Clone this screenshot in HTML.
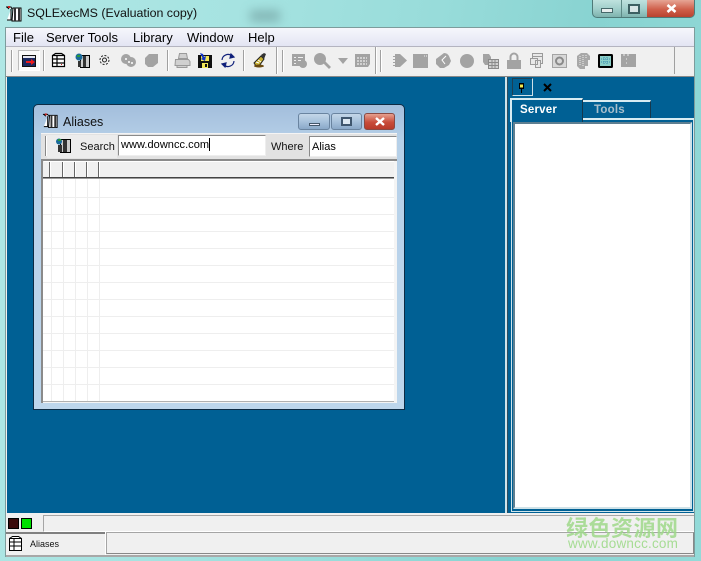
<!DOCTYPE html>
<html><head><meta charset="utf-8">
<style>
html,body{margin:0;padding:0}
body{width:701px;height:561px;overflow:hidden;position:relative;font-family:"Liberation Sans","Noto Sans CJK SC",sans-serif;background:#95dcd9}
.a{position:absolute}
.t{position:absolute;white-space:nowrap;color:#000}
svg{position:absolute;overflow:visible}
.vs{position:absolute;width:1px;background:#a0a0a0;box-shadow:1px 0 0 #fff}
</style></head><body>
<!-- desktop/aero background -->
<div class="a" style="left:0;top:0;width:701px;height:561px;background:linear-gradient(100deg,#b0e7e5 0%,#a6e3e1 30%,#98dcda 55%,#88d3d1 75%,#93dad8 100%)"></div>
<div class="a" style="left:250px;top:10px;width:30px;height:12px;background:#6f9c9c;filter:blur(5px);opacity:.6"></div>
<!-- title -->
<svg style="left:5px;top:5px" width="18" height="17" viewBox="0 0 18 17"><path d="M1 2h5l1 2M2 2l2 2M6 4v11h-4M8 3h8v13H7z" fill="#fff" stroke="#000"/><path d="M9 3h2v13H9zM13 3h2v13h-2z" fill="#333"/><rect x="3" y="1" width="2" height="2" fill="#c22"/></svg>
<div class="t" style="left:27px;top:6px;font-size:12.4px;color:#111">SQLExecMS (Evaluation copy)</div>
<!-- caption buttons -->
<div class="a" style="left:592px;top:0;width:103px;height:18px;border:1px solid #4e7a78;border-top:0;border-radius:0 0 5px 5px;box-sizing:border-box;overflow:hidden;background:linear-gradient(#bfe2de,#a2d0cc 50%,#7fb3ae)">
  <div class="a" style="left:28px;top:0;width:1px;height:17px;background:#5d8a86"></div>
  <div class="a" style="left:54px;top:0;width:48px;height:17px;background:linear-gradient(#e6a595,#cf5f4a 55%,#b8432f)"></div>
  <div class="a" style="left:8px;top:8px;width:12px;height:5px;background:#e8eeee;border:1px solid #46686a;box-sizing:border-box"></div>
  <div class="a" style="left:35px;top:4px;width:12px;height:10px;border:2px solid #3d6062;box-sizing:border-box;background:#d8e6e6"></div>
  <svg style="left:73px;top:4px" width="11" height="9"><path d="M1.500 1l8 7M9.500 1l-8 7" stroke="#fff" stroke-width="2.600"/></svg>
</div>
<!-- client -->
<div class="a" style="left:5px;top:27px;width:690px;height:530px;background:#f0f0f0;border:1px solid #7d9c9c;box-sizing:border-box"></div>
<!-- menu -->
<div class="a" style="left:6px;top:28px;width:688px;height:18px;background:linear-gradient(#f6f7fc,#e3e5f3)"></div>
<div class="a" style="left:6px;top:46px;width:688px;height:1px;background:#b4b4c0"></div>
<div class="t" style="left:13px;top:30px;font-size:13px">File</div>
<div class="t" style="left:46px;top:30px;font-size:13px">Server Tools</div>
<div class="t" style="left:133px;top:30px;font-size:13px">Library</div>
<div class="t" style="left:187px;top:30px;font-size:13px">Window</div>
<div class="t" style="left:248px;top:30px;font-size:13px">Help</div>
<!-- toolbar -->
<div class="a" style="left:6px;top:47px;width:668px;height:27px;background:#f0f0f0;border-right:1px solid #a0a0a0;border-bottom:1px solid #a0a0a0"></div>
<div class="a" style="left:6px;top:74px;width:688px;height:3px;background:#eee;border-bottom:1px solid #888;box-sizing:border-box"></div>
<div class="vs" style="left:11px;top:50px;height:22px"></div>
<div class="a" style="left:18px;top:50px;width:22px;height:21px;background:#fafafa;border:1px solid #bbb;border-right-color:#fff;border-bottom-color:#fff;box-sizing:border-box"></div>
<div class="vs" style="left:43px;top:50px;height:21px"></div>
<div class="vs" style="left:167px;top:50px;height:21px"></div>
<div class="vs" style="left:243px;top:50px;height:21px"></div>
<div class="vs" style="left:276px;top:47px;height:27px"></div>
<div class="vs" style="left:282px;top:50px;height:22px"></div>
<div class="vs" style="left:375px;top:47px;height:27px"></div>
<div class="vs" style="left:380px;top:50px;height:22px"></div>
<!-- toolbar icons -->
<svg style="left:22px;top:55px" width="15" height="12"><rect x=".5" y=".5" width="13" height="11" fill="#1c2a60" stroke="#111"/><rect x="1" y="1" width="12" height="2" fill="#e6e6f0"/><path d="M4 6h5V4l4 3-4 3V8H4z" fill="#ee1c1c"/></svg>
<svg style="left:51px;top:53px" width="16" height="15" fill="#fff" stroke="#000" stroke-width="1.200"><path d="M1.500 2.500l3-2h6l3 2v11h-12zM1.500 2.500h12M1.500 6h12M1.500 10h12M6 2.500v11"/><rect x="10" y="11" width="1" height="1" fill="#c22" stroke="none"/></svg>
<svg style="left:75px;top:53px" width="16" height="16"><path d="M5.500 2.500h9v12h-9z" fill="#ccc" stroke="#000"/><rect x="8" y="3" width="3" height="11" fill="#333"/><circle cx="4" cy="4" r="3.500" fill="#1a6a9a"/><rect x="2" y="2" width="3" height="2" fill="#2a9a3a"/><rect x="3" y="8" width="3" height="6" fill="#333"/></svg>
<svg style="left:99px;top:54px" width="11" height="12" fill="none" stroke="#222"><circle cx="5.500" cy="6" r="2"/><circle cx="5.500" cy="6" r="4.500" stroke-dasharray="2 1.500"/></svg>
<svg style="left:121px;top:54px" width="15" height="13" fill="#a3a3a3"><circle cx="5" cy="5" r="5"/><circle cx="10" cy="8" r="5"/><circle cx="5" cy="5" r="1" fill="#fff"/><circle cx="8" cy="8" r="1" fill="#fff"/><circle cx="11" cy="9" r="1" fill="#fff"/></svg>
<svg style="left:144px;top:53px" width="15" height="14" fill="#a3a3a3"><path d="M5 1h9v9l-5 4H4l-3-3V5z"/></svg>
<svg style="left:174px;top:53px" width="17" height="15" fill="#d0d0d0" stroke="#9a9a9a"><path d="M5.500 .5h7l1 5h-9zM1.500 6.500h13l1.500 2v4H1zM3 12.500h10v2H3z"/></svg>
<svg style="left:198px;top:53px" width="14" height="15"><path d="M0 2h14v13H0z" fill="#111"/><rect x="3" y="3" width="8" height="5" fill="#f2e75a"/><rect x="4" y="10" width="6" height="5" fill="#f2e75a"/><rect x="7" y="11" width="2" height="3" fill="#111"/><path d="M2 0l3 1 1 3 2-1-1 5-4-2 1.500-1z" fill="#1133cc"/></svg>
<svg style="left:220px;top:53px" width="16" height="15" fill="none" stroke="#10207a" stroke-width="1.200"><path d="M2 7a6 6 0 0 1 10-4M14 8a6 6 0 0 1-10 4"/><path d="M11 1l3 3-4 1zM5 14l-3-3 4-1z" fill="#10207a"/></svg>
<svg style="left:253px;top:53px" width="14" height="15"><path d="M1 10l7-7 3 3-5 7H3z" fill="#c8b030" stroke="#222"/><path d="M8 2l3-2 2 1-2 5z" fill="#333"/><path d="M3 9l3 1M5 7l3 2" stroke="#fff"/><ellipse cx="6" cy="13" rx="5" ry="1.500" fill="#6a4a10"/></svg>
<svg style="left:291px;top:53px" width="16" height="15" fill="#a3a3a3"><path d="M1 1h13v12H1z"/><circle cx="12" cy="11" r="4"/><path d="M3 4h2v1H3zM3 7h2v1H3zM3 10h2v1H3zM7 4h5v1H7zM7 7h3v1H7z" fill="#eee"/></svg>
<svg style="left:314px;top:53px" width="17" height="16" fill="#a3a3a3"><circle cx="6" cy="6" r="6"/><path d="M9 10l2-2 6 6-2 2z"/></svg>
<svg style="left:338px;top:58px" width="10" height="6" fill="#a3a3a3"><path d="M0 0h10L5 6z"/></svg>
<svg style="left:354px;top:53px" width="17" height="15"><path d="M1 1h15v10l-2 3H1z" fill="#a3a3a3"/><path d="M3 5h10M3 8h10M3 11h10" stroke="#fff" stroke-dasharray="2 1"/></svg>
<svg style="left:392px;top:53px" width="15" height="15" fill="#a3a3a3"><path d="M3 1h5l7 6.500L8 14H3z"/><path d="M1 3h2v1H1zM1 6h2v1H1zM1 9h2v1H1zM1 12h2v1H1z"/></svg>
<svg style="left:413px;top:54px" width="15" height="14"><rect width="15" height="14" fill="#a3a3a3"/><path d="M11 2h1M13 2h1" stroke="#eee"/></svg>
<svg style="left:436px;top:53px" width="16" height="15"><path d="M8 0a6 6 0 0 1 5 3l2 5-2 4-5 3H4L0 11V6z" fill="#a3a3a3"/><path d="M10 3L6 7l3 4" stroke="#fff" fill="none"/></svg>
<svg style="left:460px;top:54px" width="14" height="14"><circle cx="7" cy="7" r="7" fill="#a3a3a3"/></svg>
<svg style="left:482px;top:53px" width="17" height="16"><path d="M1 1h6l2 3v3H6v5H3L1 9z" fill="#a3a3a3"/><rect x="6.500" y="6.500" width="10" height="9" fill="#d0d0d0" stroke="#8a8a8a"/><path d="M7 9.500h9M7 12.500h9M10 7v8M13 7v8" stroke="#8a8a8a"/></svg>
<svg style="left:507px;top:53px" width="14" height="16"><path d="M3.500 8V4a3.500 3.500 0 0 1 7 0v4" fill="none" stroke="#a3a3a3" stroke-width="2"/><rect y="7" width="14" height="9" fill="#a3a3a3"/></svg>
<svg style="left:529px;top:53px" width="15" height="15" fill="#e8e8e8" stroke="#9a9a9a"><path d="M3.500 .5h10v10h-10zM3.500 3.500h10"/><path d="M1.500 5.500h7v6h-7zM6.500 7.500h5v7h-5z"/></svg>
<svg style="left:552px;top:54px" width="15" height="14"><rect width="15" height="14" fill="#a3a3a3"/><rect x="1" y="1" width="13" height="12" fill="#d8d8d8"/><circle cx="7.500" cy="7" r="3.500" fill="none" stroke="#8a8a8a" stroke-width="2"/></svg>
<svg style="left:576px;top:53px" width="15" height="16"><path d="M1 3l4-3h6l3 3v4h-2v6H9v3H4l-3-3z" fill="#a8a8a8"/><path d="M4 3v10M7 2v11M10 2v4" stroke="#eee" stroke-dasharray="1 1"/></svg>
<svg style="left:598px;top:54px" width="15" height="14"><rect x=".5" y=".5" width="14" height="13" rx="1" fill="#8ccfc8" stroke="#000"/><rect x="1.500" y="1.500" width="12" height="11" fill="none" stroke="#000"/><path d="M3 5h9M3 8h9M6 3v8M9 3v8" stroke="#3b8fb0" stroke-dasharray="1 1"/></svg>
<svg style="left:620px;top:53px" width="17" height="15"><path d="M1 1h15v13H1z" fill="#a3a3a3"/><path d="M0 2h1M0 5h1M0 8h1M0 11h1M4 14.500h2M9 14.500h2M3 2h2M7 2h2M6 6h1M6 10h1" stroke="#eee"/></svg>
<!-- MDI area -->
<div class="a" style="left:7px;top:77px;width:687px;height:436px;background:#006094"></div>
<div class="a" style="left:505px;top:77px;width:2px;height:436px;background:#cde3ea"></div>
<div class="a" style="left:507px;top:77px;width:1px;height:436px;background:#304b5c"></div>
<!-- right panel -->
<div class="a" style="left:512px;top:78px;width:21px;height:18px;border:1px solid #cfe0e8;border-left-color:#1c3f54;border-top-color:#1c3f54;box-sizing:border-box"></div>
<svg style="left:518px;top:83px" width="7" height="10"><path d="M1 .5h5M1.500 1v4h4V1z" fill="#f2ea50" stroke="#000"/><path d="M1 5.500h5M3.500 6v4" stroke="#000"/></svg>
<svg style="left:543px;top:83px" width="9" height="9"><path d="M1 1l7 7M8 1L1 8" stroke="#000" stroke-width="2"/></svg>
<!-- tabs -->
<div class="a" style="left:511px;top:120px;width:183px;height:392px;background:#006094;border:1px solid #cfe4ea;border-top:0;box-sizing:border-box"></div>
<div class="a" style="left:582px;top:118px;width:112px;height:2px;background:#d8ecf2"></div>
<div class="a" style="left:510px;top:98px;width:73px;height:24px;background:#006094;border:2px solid #d8ecf2;border-bottom:0;border-right:1px solid #14384d;box-sizing:border-box"></div>
<div class="t" style="left:520px;top:104px;font-size:11.500px;font-weight:bold;color:#fff;letter-spacing:.2px">Server</div>
<div class="a" style="left:583px;top:100px;width:68px;height:18px;background:#006094;border-top:2px solid #d8ecf2;border-right:1px solid #14384d;box-sizing:border-box"></div>
<div class="t" style="left:594px;top:104px;font-size:11.500px;font-weight:bold;color:#a8bfcc;letter-spacing:.2px">Tools</div>
<div class="a" style="left:513px;top:122px;width:179px;height:387px;background:#fff;border:2px solid #5e7f91;border-right-color:#cfe2e8;border-bottom-color:#cfe2e8;box-sizing:border-box"></div>
<!-- Aliases child window -->
<div class="a" style="left:33px;top:104px;width:372px;height:306px;border:1px solid #0d2b44;border-radius:5px 5px 0 0;box-sizing:border-box;background:linear-gradient(#a3bedc,#b6d0e8 12%,#bdd6ec)"></div>
<svg style="left:42px;top:112px" width="17" height="17" viewBox="0 0 18 17"><path d="M1 2h5l1 2M2 2l2 2M6 4v11h-4M8 3h8v13H7z" fill="#fff" stroke="#000"/><path d="M9 3h2v13H9zM13 3h2v13h-2z" fill="#333"/><rect x="3" y="1" width="2" height="2" fill="#c22"/></svg>
<div class="t" style="left:63px;top:115px;font-size:12.500px;color:#111">Aliases</div>
<div class="a" style="left:298px;top:113px;width:32px;height:17px;border:1px solid #6a84a0;border-radius:3px;box-sizing:border-box;background:linear-gradient(#c4d6e8,#a8c2dc 50%,#8aa8c8)"><div class="a" style="left:10px;top:9px;width:11px;height:3px;background:#eef;border:1px solid #44576a;box-sizing:border-box"></div></div>
<div class="a" style="left:331px;top:113px;width:31px;height:17px;border:1px solid #6a84a0;border-radius:3px;box-sizing:border-box;background:linear-gradient(#c4d6e8,#a8c2dc 50%,#8aa8c8)"><div class="a" style="left:9px;top:3px;width:11px;height:9px;border:2px solid #3f566e;box-sizing:border-box;background:#dde8f2"></div></div>
<div class="a" style="left:364px;top:113px;width:31px;height:17px;border:1px solid #8a4a44;border-radius:3px;box-sizing:border-box;background:linear-gradient(#e6a090,#c84c3a 55%,#b83a2a);overflow:hidden"><svg style="left:10px;top:3px" width="10" height="9"><path d="M1 1l8 7M9 1l-8 7" stroke="#fff" stroke-width="2.400"/></svg></div>
<!-- search bar -->
<div class="a" style="left:41px;top:133px;width:356px;height:26px;background:#e2e2e2;border-top:1px solid #f4f4f4;box-sizing:border-box"></div>
<div class="a" style="left:45px;top:136px;width:1px;height:20px;background:#888;box-shadow:1px 0 0 #fff"></div>
<div class="a" style="left:47px;top:135px;width:70px;height:23px;background:#ececec"></div>
<svg style="left:55px;top:138px" width="16" height="16"><path d="M5.500 1.500h10v13h-10z" fill="#ccc" stroke="#000"/><rect x="8" y="2" width="4" height="12" fill="#333"/><circle cx="4" cy="3.500" r="3" fill="#1a6a9a"/><rect x="3" y="1" width="3" height="2" fill="#2a9a3a"/><rect x="3" y="7" width="4" height="7" fill="#333"/></svg>
<div class="t" style="left:80px;top:141px;font-size:11px;color:#111">Search</div>
<div class="a" style="left:118px;top:135px;width:148px;height:21px;background:#fff;border:1px solid #8a8a8a;border-right-color:#eee;border-bottom-color:#eee;box-sizing:border-box"></div>
<div class="t" style="left:121px;top:139px;font-size:11px;letter-spacing:.05px">www.downcc.com</div>
<div class="a" style="left:209px;top:138px;width:1px;height:13px;background:#000"></div>
<div class="t" style="left:271px;top:141px;font-size:11px;color:#111">Where</div>
<div class="a" style="left:309px;top:136px;width:88px;height:21px;background:#fff;border:1px solid #8a8a8a;border-right-color:#eee;border-bottom-color:#eee;box-sizing:border-box"></div>
<div class="t" style="left:312px;top:141px;font-size:11px">Alias</div>
<!-- grid -->
<div class="a" style="left:41px;top:159px;width:356px;height:244px;background:#f4f4f4;border-top:2px solid #8a8a8a;border-left:2px solid #8a8a8a;box-sizing:border-box"></div>
<div class="a" style="left:43px;top:161px;width:351px;height:240px;background:#fff"></div>
<div class="a" style="left:43px;top:401px;width:351px;height:1px;background:#b0b0b0"></div>
<div class="a" style="left:43px;top:161px;width:351px;height:17px;background:#f0f0f0;border-bottom:1px solid #444;box-sizing:border-box"></div>
<div class="a" style="left:43px;top:178px;width:351px;height:1px;background:#9a9a9a"></div>
<svg style="left:43px;top:161px" width="351" height="240">
<g stroke="#666"><path d="M6.500 1v15M19.500 1v15M31.500 1v15M43.500 1v15M55.500 1v15"/></g>
<g stroke="#fff"><path d="M1 .5h350M7.500 1v15M20.500 1v15M32.500 1v15M44.500 1v15M56.500 1v15"/></g>
<g stroke="#eeeeee"><path d="M8.500 18v222M20.500 18v222M32.500 18v222M44.500 18v222M56.500 18v222"/>
<path d="M0 36.500h351M0 53.500h351M0 70.500h351M0 87.500h351M0 104.500h351M0 121.500h351M0 138.500h351M0 155.500h351M0 172.500h351M0 189.500h351M0 206.500h351M0 223.500h351"/></g>
</svg>
<!-- status -->
<div class="a" style="left:8px;top:518px;width:11px;height:11px;background:#3a0a0a;border:1px solid #000;box-sizing:border-box"></div>
<div class="a" style="left:21px;top:518px;width:11px;height:11px;background:#00e000;border:1px solid #000;box-sizing:border-box"></div>
<div class="a" style="left:43px;top:515px;width:651px;height:17px;background:#f0f0f0;border-top:1px solid #a5a5a5;border-left:1px solid #a5a5a5;border-bottom:1px solid #fff;box-sizing:border-box"></div>
<div class="a" style="left:6px;top:532px;width:99px;height:23px;background:#f0f0f0;border-top:2px solid #808080;box-sizing:border-box"></div>
<div class="a" style="left:105px;top:532px;width:1px;height:23px;background:#fff"></div>
<div class="a" style="left:106px;top:532px;width:588px;height:22px;background:#f0f0f0;border:1px solid #a5a5a5;border-right-color:#888;border-bottom-color:#888;box-sizing:border-box"></div>
<div class="a" style="left:6px;top:555px;width:688px;height:2px;background:#a8a8a8"></div>
<svg style="left:8px;top:536px" width="16" height="16" fill="#fff" stroke="#000"><path d="M1.500 2.500l3-2h6l3 2v12h-12zM1.500 2.500h12M1.500 6h12M1.500 10h12M6 2.500v12"/></svg>
<div class="t" style="left:30px;top:539px;font-size:9px;color:#111">Aliases</div>
<!-- watermark -->
<div class="t" style="left:566px;top:511px;font-size:22px;font-weight:bold;color:#9fd98a;opacity:.85;letter-spacing:.5px">绿色资源网</div>
<div class="t" style="left:568px;top:536px;font-size:13.500px;color:#a6dc94;letter-spacing:.2px">www.downcc.com</div>
</body></html>
